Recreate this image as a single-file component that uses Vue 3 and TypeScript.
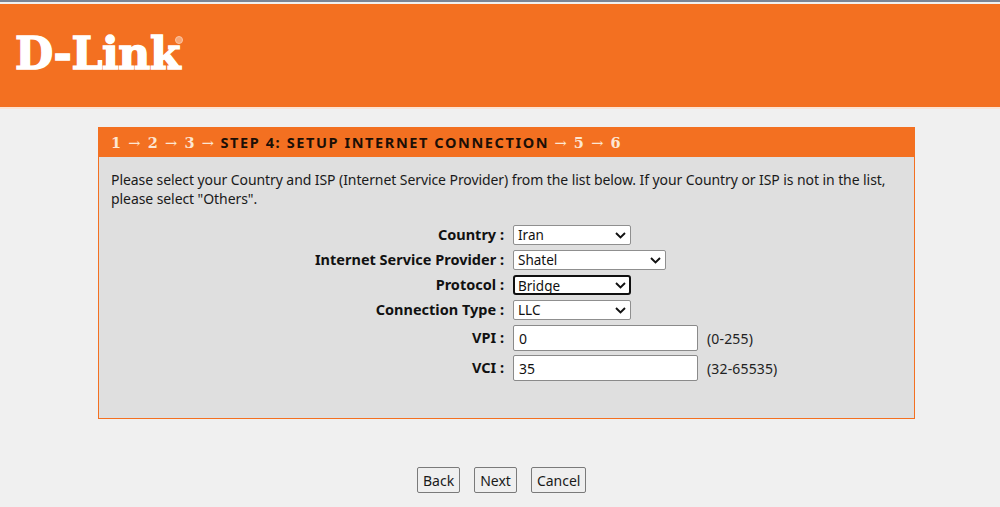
<script setup lang="ts">
import { ref } from 'vue';

// wizard values
const country = ref('Iran');
const isp = ref('Shatel');
const protocol = ref('Bridge');
const connType = ref('LLC');
const vpi = ref('0');
const vci = ref('35');

const selects = [
  { label: 'Country :', model: country, options: ['Iran'], cls: '' },
  { label: 'Internet Service Provider :', model: isp, options: ['Shatel'], cls: 'wide' },
  { label: 'Protocol :', model: protocol, options: ['Bridge'], cls: 'focused' },
  { label: 'Connection Type :', model: connType, options: ['LLC'], cls: '' },
];
</script>

<template>
  <div class="page">
    <header class="banner">
      <div class="logo">D-Link<span class="reg"></span></div>
    </header>

    <section class="panel">
      <h2 class="panel-title">
        <span class="done">1 <i>→</i> 2 <i>→</i> 3 <i>→</i></span>
        STEP 4: SETUP INTERNET CONNECTION
        <span class="done"><i>→</i> 5 <i>→</i> 6</span>
      </h2>
      <div class="panel-body">
        <p class="intro">
          Please select your Country and ISP (Internet Service Provider) from the list below. If your Country or ISP is not in the list, please select "Others".
        </p>
        <div class="form">
          <template v-for="s in selects" :key="s.label">
            <label>{{ s.label }}</label>
            <div class="field">
              <div class="sel-wrap" :class="s.cls">
                <select v-model="s.model.value" class="sel">
                  <option v-for="o in s.options" :key="o">{{ o }}</option>
                </select>
                <svg class="chev" width="11" height="7" viewBox="0 0 11 7">
                  <path d="M1 1l4.5 4.5L10 1" fill="none" stroke="#111" stroke-width="1.9" />
                </svg>
              </div>
            </div>
          </template>

          <label class="tall">VPI :</label>
          <div class="field tall"><input v-model="vpi" class="txt" type="text" /><span class="hint">(0-255)</span></div>

          <label class="tall last">VCI :</label>
          <div class="field tall last"><input v-model="vci" class="txt" type="text" /><span class="hint">(32-65535)</span></div>
        </div>
      </div>
    </section>

    <div class="actions">
      <button class="btn">Back</button>
      <button class="btn">Next</button>
      <button class="btn">Cancel</button>
    </div>
  </div>
</template>

<style>
html, body {
  margin: 0;
  background: #f0f0f0;
}
</style>

<style scoped>
.page {
  height: 507px;
  overflow: hidden;
  background: #f0f0f0;
  font-family: "Noto Sans", "DejaVu Sans", sans-serif;
  color: #1a1a1a;
  border-top: 2px solid #7b8494;
  box-sizing: border-box;
}
.banner {
  margin-top: 2px;
  height: 103px;
  background: #f37021;
  border-bottom: 2px solid #fbe3d3;
  padding-left: 15px;
}
.logo {
  position: relative;
  display: inline-block;
  margin-top: 26px;
  font-family: "DejaVu Serif", serif;
  font-weight: 700;
  font-size: 44px;
  line-height: 48px;
  letter-spacing: -0.4px;
  color: #fff;
  -webkit-text-stroke: 1.5px #fff;
}
.reg {
  position: absolute;
  right: -3px;
  top: 6px;
  width: 6px;
  height: 6px;
  background: #f8a878;
  border: 1px solid #fbc6a4;
  border-radius: 50%;
}
.panel {
  width: 817px;
  height: 292px;
  margin: 18px 0 0 98px;
  box-sizing: border-box;
  border: 1px solid #f37021;
  background: #dfdfdf;
}
.panel-title {
  margin: 0;
  height: 29px;
  line-height: 29px;
  padding-left: 12px;
  background: #f37021;
  color: #1c0f06;
  font-family: "Noto Sans", sans-serif;
  font-size: 14.5px;
  font-weight: 700;
  letter-spacing: 1.6px;
  white-space: pre-wrap;
}
.done {
  font-family: "DejaVu Serif", serif;
  color: #fde6d2;
  font-size: 14.5px;
  letter-spacing: 1.1px;
}
.done i {
  font-style: normal;
  font-weight: 400;
}
.panel-body {
  padding: 0 12px;
}
.intro {
  margin: 0;
  padding-top: 13px;
  font-size: 14px;
  line-height: 19px;
  letter-spacing: -0.08px;
  width: 790px;
}
.form {
  display: grid;
  grid-template-columns: 408px 1fr;
  column-gap: 6px;
  row-gap: 5px;
  margin: 17px 0 0 -12px;
}
label {
  font-family: "Noto Sans", sans-serif;
  font-weight: 700;
  font-size: 14.5px;
  line-height: 19px;
  text-align: right;
  padding-right: 3px;
  color: #111;
}
label.tall {
  line-height: 25px;
}
.field {
  display: flex;
  align-items: center;
  height: 20px;
}
.field.tall {
  height: 26px;
}
.last {
  margin-top: -1px;
}
.sel-wrap {
  position: relative;
  width: 118px;
  height: 20px;
}
.sel-wrap.wide {
  width: 153px;
}
.sel {
  display: block;
  appearance: none;
  width: 100%;
  height: 100%;
  box-sizing: border-box;
  font-family: "Noto Sans", sans-serif;
  font-size: 13.5px;
  line-height: 18px;
  background: #fff;
  color: #111;
  border: 1px solid #8f8f8f;
  border-radius: 2px;
  padding: 0 0 0 4px;
}
.focused .sel {
  border: 2px solid #101010;
  border-radius: 3px;
  padding-left: 3px;
}
.chev {
  position: absolute;
  right: 5px;
  top: 7px;
  pointer-events: none;
}
.txt {
  width: 185px;
  height: 26px;
  box-sizing: border-box;
  border: 1px solid #8a8a8a;
  border-radius: 2px;
  background: #fff;
  padding: 0 5px;
  font-family: "Noto Sans", sans-serif;
  font-size: 14px;
  color: #111;
}
.hint {
  margin-left: 9px;
  font-size: 14px;
  letter-spacing: 0.15px;
  color: #222;
}
.actions {
  display: flex;
  gap: 14px;
  margin: 48px 0 0 417px;
}
.btn {
  height: 26px;
  box-sizing: border-box;
  padding: 0 5px;
  font-family: "Noto Sans", sans-serif;
  font-size: 14px;
  color: #1a1a1a;
  background: #efefef;
  border: 1px solid #7a7a7a;
  border-radius: 2px;
}
</style>
